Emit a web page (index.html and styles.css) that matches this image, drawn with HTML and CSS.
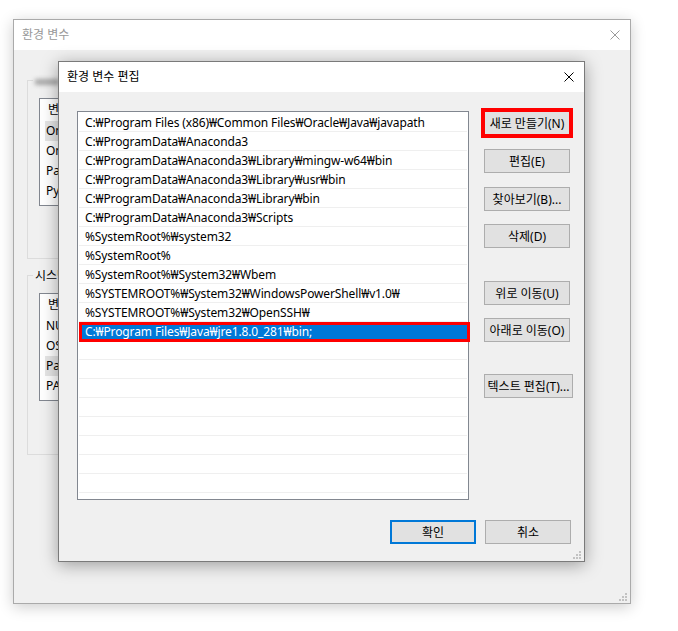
FILE: index.html
```html
<!DOCTYPE html>
<html lang="ko">
<head>
<meta charset="utf-8">
<title>환경 변수 편집</title>
<link rel="stylesheet" href="styles.css">
</head>
<body>
<div class="desktop">
  <div class="win win-back">
    <div class="titlebar">
      <span class="title">환경 변수</span>
      <svg class="close" viewBox="0 0 10 10" width="10" height="10"><path d="M0.5 0.5L9.5 9.5M9.5 0.5L0.5 9.5" stroke="#9a9a9a" stroke-width="1" fill="none"/></svg>
    </div>
    <div class="back-body">
      <fieldset class="group group-user">
        <legend><span class="blur"></span></legend>
        <div class="mini-list">
          <div class="mini-head">변수</div>
          <div class="mini-row sel">OneDrive</div>
          <div class="mini-row">OneDriveConsumer</div>
          <div class="mini-row">Path</div>
          <div class="mini-row">PyCharm</div>
        </div>
      </fieldset>
      <fieldset class="group group-sys">
        <legend><span class="legend-text">시스템 변수(S)</span></legend>
        <div class="mini-list">
          <div class="mini-head">변수</div>
          <div class="mini-row">NUMBER_OF_PROCESSORS</div>
          <div class="mini-row">OS</div>
          <div class="mini-row sel">Path</div>
          <div class="mini-row">PATHEXT</div>
        </div>
      </fieldset>
    </div>
    <svg class="grip" viewBox="0 0 8 8" width="8" height="8"><g fill="#c2c2c2"><rect x="6" y="0" width="2" height="2"/><rect x="3" y="3" width="2" height="2"/><rect x="6" y="3" width="2" height="2"/><rect x="0" y="6" width="2" height="2"/><rect x="3" y="6" width="2" height="2"/><rect x="6" y="6" width="2" height="2"/></g></svg>
  </div>

  <div class="win win-edit">
    <div class="titlebar">
      <span class="title">환경 변수 편집</span>
      <svg class="close" viewBox="0 0 10 10" width="10" height="10"><path d="M0.5 0.5L9.5 9.5M9.5 0.5L0.5 9.5" stroke="#000" stroke-width="1" fill="none"/></svg>
    </div>
    <div class="edit-body">
      <div class="main">
        <div class="path-list">
          <div class="row">C:₩Program Files (x86)₩Common Files₩Oracle₩Java₩javapath</div>
          <div class="row">C:₩ProgramData₩Anaconda3</div>
          <div class="row">C:₩ProgramData₩Anaconda3₩Library₩mingw-w64₩bin</div>
          <div class="row">C:₩ProgramData₩Anaconda3₩Library₩usr₩bin</div>
          <div class="row">C:₩ProgramData₩Anaconda3₩Library₩bin</div>
          <div class="row">C:₩ProgramData₩Anaconda3₩Scripts</div>
          <div class="row">%SystemRoot%₩system32</div>
          <div class="row">%SystemRoot%</div>
          <div class="row">%SystemRoot%₩System32₩Wbem</div>
          <div class="row">%SYSTEMROOT%₩System32₩WindowsPowerShell₩v1.0₩</div>
          <div class="row">%SYSTEMROOT%₩System32₩OpenSSH₩</div>
          <div class="row sel">C:₩Program Files₩Java₩jre1.8.0_281₩bin;</div>
          <div class="row"></div>
          <div class="row"></div>
          <div class="row"></div>
          <div class="row"></div>
          <div class="row"></div>
          <div class="row"></div>
          <div class="row"></div>
          <div class="row"></div>
        </div>
        <div class="buttons">
          <button class="btn btn-new">새로 만들기(N)</button>
          <button class="btn gap-a">편집(E)</button>
          <button class="btn gap-a">찾아보기(B)...</button>
          <button class="btn gap-b">삭제(D)</button>
          <button class="btn gap-c">위로 이동(U)</button>
          <button class="btn gap-b">아래로 이동(O)</button>
          <button class="btn btn-wide gap-d">텍스트 편집(T)...</button>
        </div>
      </div>
      <div class="footer">
        <button class="btn btn-default">확인</button>
        <button class="btn">취소</button>
      </div>
    </div>
    <svg class="grip" viewBox="0 0 8 8" width="8" height="8"><g fill="#c2c2c2"><rect x="6" y="0" width="2" height="2"/><rect x="3" y="3" width="2" height="2"/><rect x="6" y="3" width="2" height="2"/><rect x="0" y="6" width="2" height="2"/><rect x="3" y="6" width="2" height="2"/><rect x="6" y="6" width="2" height="2"/></g></svg>
  </div>
</div>
</body>
</html>
```

FILE: styles.css
```css
* { box-sizing: border-box; }
html, body { margin: 0; padding: 0; }
body {
  width: 678px;
  height: 631px;
  overflow: hidden;
  background: #fff;
  font-family: "Noto Sans", "Noto Sans CJK KR", sans-serif;
  font-size: 12px;
  color: #000;
}
.desktop { position: relative; width: 678px; height: 631px; }

.win {
  position: absolute;
  display: flex;
  flex-direction: column;
  background: #f0f0f0;
}
.win-back {
  left: 13px; top: 19px;
  width: 618px; height: 585px;
  border: 1px solid #aaaaaa;
  box-shadow: 0 3px 14px rgba(0, 0, 0, 0.2);
}
.win-edit {
  left: 58px; top: 61px;
  width: 527px; height: 501px;
  border: 1px solid #7a7a7a;
  box-shadow: 0 3px 16px rgba(0, 0, 0, 0.35);
}
.titlebar {
  flex: none;
  height: 30px;
  background: #fff;
  display: flex;
  align-items: center;
  padding: 0 10px 0 8px;
}
.title { flex: 1; line-height: 16px; }
.win-back .title { color: #999; }
.close { display: block; flex: none; }

.grip { position: absolute; right: 3px; bottom: 2px; display: block; }

/* background window (mostly hidden behind the dialog) */
.back-body {
  flex: 1;
  padding: 23px 0 0 13px;
  display: flex;
  flex-direction: column;
  gap: 9px;
}
.group {
  margin: 0;
  padding: 0;
  border: 1px solid #dcdcdc;
  width: 545px;
  min-width: 0;
}
.group-user { height: 186px; }
.group-sys { height: 187px; }
.group legend {
  padding: 0 0 0 2px;
  margin-left: 5px;
  line-height: 15px;
  height: 15px;
  font-size: 12px;
  white-space: nowrap;
}
.legend-text {
  display: inline-block;
  width: 24px;
  overflow: hidden;
  vertical-align: top;
}
.blur {
  display: inline-block;
  width: 24px;
  height: 6px;
  background: #a8a8a8;
  filter: blur(2px);
  vertical-align: middle;
}
.mini-list {
  margin: 10px 0 0 11px;
  width: 21px;
  height: 108px;
  border: 1px solid #828790;
  background: #fff;
  padding: 0 0 0 5px;
  overflow: hidden;
}
.mini-head { height: 22px; line-height: 22px; padding-left: 3px; white-space: nowrap; overflow: hidden; }
.mini-row { height: 20px; line-height: 20px; padding-left: 1px; white-space: nowrap; overflow: hidden; }
.mini-row.sel { background: #e5e5e5; }

/* edit dialog */
.edit-body {
  flex: 1;
  padding: 19px 13px 15px 18px;
  display: flex;
  flex-direction: column;
}
.main { display: flex; gap: 15px; align-items: flex-start; }
.path-list {
  flex: none;
  width: 392px;
  height: 389px;
  border: 1px solid #828790;
  background: #fff;
  padding: 1px;
}
.row {
  position: relative;
  height: 19px;
  line-height: 17px;
  padding-top: 1px;
  border-bottom: 1px solid #efefef;
  padding-left: 6px;
  white-space: nowrap;
  letter-spacing: -0.12px;
}
.row.sel { background: #0078d7; color: #fff; border-bottom-color: #0078d7; }
.row.sel::after {
  content: "";
  position: absolute;
  left: 0; top: 0; right: -3px; bottom: -2px;
  border: 3px solid #ff0000;
}

.buttons { display: flex; flex-direction: column; align-items: flex-start; }
.btn {
  width: 86px;
  height: 24px;
  margin: 0;
  padding: 0;
  background: #e1e1e1;
  border: 1px solid #adadad;
  font: inherit;
  color: #000;
  display: flex;
  align-items: center;
  justify-content: center;
  white-space: nowrap;
}
.btn-wide { width: 89px; }
.btn-new { border-color: #ff0000; box-shadow: 0 0 0 3px #ff0000; }
.gap-a { margin-top: 14px; }
.gap-b { margin-top: 13px; }
.gap-c { margin-top: 33px; }
.gap-d { margin-top: 32px; }
.btn-default { border: 2px solid #0078d7; }

.footer {
  margin-top: 20px;
  display: flex;
  justify-content: flex-end;
  gap: 9px;
}
```
